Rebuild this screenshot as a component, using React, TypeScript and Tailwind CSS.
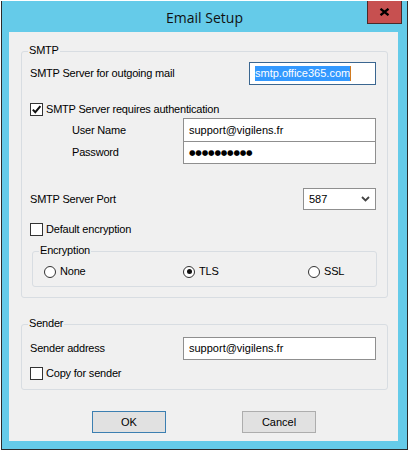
import React from 'react';

const font = { fontFamily: '"Liberation Sans", Arial, sans-serif' };

const Label: React.FC<{ children: React.ReactNode; className?: string }> = ({ children, className }) => (
  <span className={`text-[11px] leading-[13px] tracking-[-0.2px] text-black whitespace-nowrap ${className ?? ''}`}>{children}</span>
);

const CheckBox: React.FC<{ checked?: boolean; label: string }> = ({ checked, label }) => (
  <div className="flex items-center h-[13px] pl-[8px]">
    <div className="w-[13px] h-[13px] border border-[#333333] bg-white flex items-center justify-center">
      {checked && (
        <svg width="11" height="11" viewBox="0 0 11 11">
          <path d="M1.8 5.6 L4.3 8.2 L9.4 2.2" fill="none" stroke="#111" strokeWidth="2" />
        </svg>
      )}
    </div>
    <Label className="ml-[3px]">{label}</Label>
  </div>
);

const Radio: React.FC<{ checked?: boolean; label: string; className?: string }> = ({ checked, label, className }) => (
  <div className={`flex items-center ${className ?? ''}`}>
    <div className="w-[12px] h-[12px] rounded-full border border-[#333333] bg-white flex items-center justify-center">
      {checked && <div className="w-[5px] h-[5px] rounded-full bg-[#111]" />}
    </div>
    <Label className="ml-[4px]">{label}</Label>
  </div>
);

const GroupBox: React.FC<{ title: string; className?: string; children: React.ReactNode }> = ({ title, className, children }) => (
  <div className={`relative border border-[#d8dde2] rounded-[3px] ${className ?? ''}`}>
    <span className="absolute left-[6px] -top-[8px] px-[1px] bg-[#f0f0f0] text-[11px] leading-[13px] tracking-[-0.2px] text-black">
      {title}
    </span>
    {children}
  </div>
);

const TextBox: React.FC<{ value?: string; className?: string; children?: React.ReactNode }> = ({ value, className, children }) => (
  <div className={`bg-white border border-[#8f8f8f] flex items-center pl-[5px] text-[11px] text-black ${className ?? ''}`}>
    {children ?? value}
  </div>
);

const App: React.FC = () => {
  return (
    <div className="w-[410px] h-[452px] bg-white overflow-hidden" style={font}>
      <div className="ml-[1px] mt-[1px] w-[407px] h-[449px] bg-[#65cbe9] border-l border-r border-b border-[#2b2b2b] px-[7px]">
        {/* Title bar */}
        <div className="relative h-[31px] flex items-center justify-center">
          <span className="text-[14px] text-[#111] pt-[1px]" style={{ fontFamily: '"Open Sans", "Noto Sans", sans-serif' }}>
            Email Setup
          </span>
          <button className="absolute -right-[2px] top-0 w-[35px] h-[23px] bg-[#c75050] border-l border-r border-b border-[#4a2a2a] flex items-center justify-center">
            <svg width="11" height="8" viewBox="0 0 11 8">
              <path d="M1.5 0.8 L9.5 7.2 M9.5 0.8 L1.5 7.2" stroke="#000" strokeWidth="2.3" />
            </svg>
          </button>
        </div>

        {/* Client area */}
        <div className="w-[389px] h-[409px] bg-[#f0f0f0] pt-[19px] pl-[12px] flex flex-col">
          <GroupBox title="SMTP" className="w-[367px] pb-[10px]">
            <div className="mt-[10px] h-[23px] flex items-center pl-[8px] pr-[11px]">
              <Label className="flex-1">SMTP Server for outgoing mail</Label>
              <div className="w-[127px] h-[23px] bg-white border border-[#3a6690] flex items-center pl-[5px]">
                <span className="bg-[#3399ff] text-white text-[11px] leading-[15px]">smtp.office365.com</span>
                <span className="w-[1px] h-[15px] bg-[#d07a20]" />
              </div>
            </div>

            <div className="mt-[18px]">
              <CheckBox checked label="SMTP Server requires authentication" />
            </div>

            <div className="mt-[2px] h-[24px] flex items-center pl-[50px] pr-[11px]">
              <Label className="flex-1">User Name</Label>
              <TextBox value="support@vigilens.fr" className="w-[193px] h-[24px]" />
            </div>
            <div className="-mt-px h-[23px] flex items-center pl-[50px] pr-[11px]">
              <Label className="flex-1">Password</Label>
              <TextBox className="w-[193px] h-[23px]">
                <span className="text-[7.5px] leading-[10px] pt-[1px] tracking-[-0.2px]" style={{ fontFamily: '"DejaVu Sans", sans-serif' }}>
                  ●●●●●●●●●●
                </span>
              </TextBox>
            </div>

            <div className="mt-[24px] h-[22px] flex items-center pl-[8px] pr-[11px]">
              <Label className="flex-1">SMTP Server Port</Label>
              <div className="w-[73px] h-[22px] bg-white border border-[#8f8f8f] flex items-center pl-[5px] pr-[5px]">
                <span className="flex-1 text-[11px] text-black">587</span>
                <svg width="9" height="6" viewBox="0 0 9 6">
                  <path d="M1 1 L4.5 4.5 L8 1" fill="none" stroke="#444" strokeWidth="1.8" />
                </svg>
              </div>
            </div>

            <div className="mt-[13px]">
              <CheckBox label="Default encryption" />
            </div>

            <GroupBox title="Encryption" className="mt-[15px] ml-[10px] w-[345px] h-[36px]">
              <div className="mt-[13px] flex items-center">
                <Radio label="None" className="pl-[11px] w-[150px]" />
                <Radio checked label="TLS" className="w-[125px]" />
                <Radio label="SSL" />
              </div>
            </GroupBox>
          </GroupBox>

          <GroupBox title="Sender" className="mt-[26px] w-[367px] pb-[9px]">
            <div className="mt-[12px] h-[23px] flex items-center pl-[8px] pr-[11px]">
              <Label className="flex-1">Sender address</Label>
              <TextBox value="support@vigilens.fr" className="w-[193px] h-[23px]" />
            </div>
            <div className="mt-[7px]">
              <CheckBox label="Copy for sender" />
            </div>
          </GroupBox>

          <div className="mt-[21px] flex pl-[71px] gap-[76px]">
            <button className="w-[74px] h-[22px] bg-[#e1e1e1] border border-[#3c7fb1] text-[11px] text-black">OK</button>
            <button className="w-[74px] h-[22px] bg-[#e1e1e1] border border-[#adadad] text-[11px] text-black">Cancel</button>
          </div>
        </div>
      </div>
    </div>
  );
};

export default App;
